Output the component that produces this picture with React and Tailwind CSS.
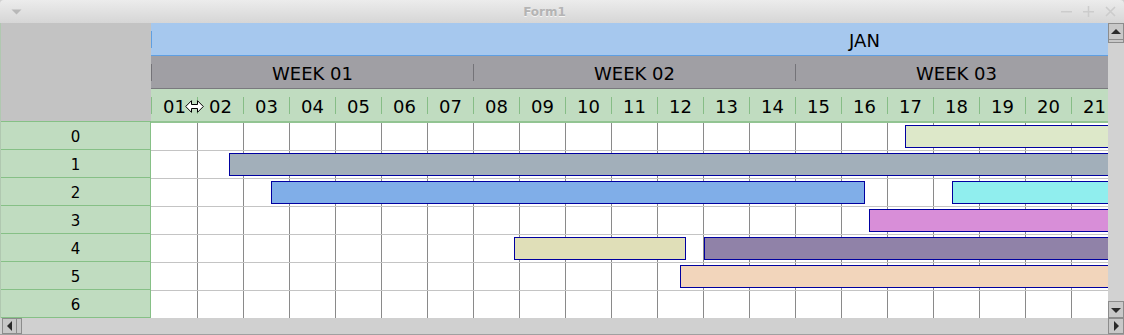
import React from "react";

const DAYS = Array.from({ length: 21 }, (_, i) => String(i + 1).padStart(2, "0"));
const WEEKS = ["WEEK 01", "WEEK 02", "WEEK 03"];

const BARS = [
  { row: 0, left: 754, width: 2000, color: "#dde8c9" },
  { row: 1, left: 78, width: 2000, color: "#a2afba" },
  { row: 2, left: 120, width: 594, color: "#80aee8" },
  { row: 2, left: 801, width: 2000, color: "#90eeee" },
  { row: 3, left: 718, width: 2000, color: "#d88ed8" },
  { row: 4, left: 363, width: 172, color: "#e0dfb8" },
  { row: 4, left: 553, width: 2000, color: "#9082a8" },
  { row: 5, left: 529, width: 2000, color: "#f2d5bb" },
];

function TitleBar() {
  return (
    <div className="h-[23px] flex items-center bg-gradient-to-b from-[#ececec] to-[#d6d6d6] rounded-t-[4px] pl-[10px] pr-[8px]">
      <svg width="11" height="6" viewBox="0 0 11 6" className="ml-[1px]">
        <path d="M0.5 0.5 L10.5 0.5 L5.5 5.5 Z" fill="#b8b8b8" />
      </svg>
      <div className="flex-1 flex justify-center pl-[6px]">
        <span className="text-[12px] font-bold text-[#b4b4b4] [text-shadow:0_1px_0_#f4f4f4]">
          Form1
        </span>
      </div>
      <div className="flex items-center gap-[11px]">
        <svg width="11" height="11" viewBox="0 0 11 11">
          <rect x="0" y="5" width="11" height="1.5" fill="#cccccc" />
        </svg>
        <svg width="11" height="11" viewBox="0 0 11 11">
          <rect x="0" y="5" width="11" height="1.5" fill="#cccccc" />
          <rect x="4.75" y="0" width="1.5" height="11" fill="#cccccc" />
        </svg>
        <svg width="11" height="11" viewBox="0 0 11 11">
          <path d="M1 1 L10 10 M10 1 L1 10" stroke="#cccccc" strokeWidth="1.6" />
        </svg>
      </div>
    </div>
  );
}

function Headers() {
  return (
    <div className="flex flex-col w-[1426px]">
      <div className="h-[33px] flex items-center bg-[#a6c8ee] border-b border-[#5f9fe2]">
        <div className="w-[1426px] flex items-center">
          <span className="w-px h-[17px] bg-[#5f9fe2]" />
          <span className="flex-1 text-center pt-[3px]">JAN</span>
        </div>
      </div>
      <div className="h-[33px] flex items-center bg-[#a09fa4] border-b border-[#7a797e]">
        {WEEKS.map((w) => (
          <div key={w} className="w-[322px] flex items-center shrink-0">
            <span className="w-px h-[17px] bg-[#747378]" />
            <span className="flex-1 text-center pt-[3px]">{w}</span>
          </div>
        ))}
      </div>
      <div className="h-[34px] flex items-center bg-[#c0dcc0] border-b-2 border-[#92c492]">
        {DAYS.map((d) => (
          <div key={d} className="w-[46px] flex items-center shrink-0">
            <span className="w-px h-[17px] bg-[#86bd86]" />
            <span className="flex-1 text-center pt-[2px]">{d}</span>
          </div>
        ))}
      </div>
    </div>
  );
}

function Grid() {
  return (
    <div className="relative w-[1426px]">
      {Array.from({ length: 7 }, (_, r) => (
        <div key={r} className="h-[28px] flex border-b border-[#c4c4c4]">
          {DAYS.map((d, i) => (
            <div
              key={d}
              className={
                i === 0
                  ? "w-[46px] shrink-0 bg-white"
                  : "w-[46px] shrink-0 bg-white border-l border-[#8a8a8a]"
              }
            />
          ))}
        </div>
      ))}
      {BARS.map((b, i) => (
        <div
          key={i}
          className="absolute h-[23px] border border-[#0000a0]"
          style={{ left: b.left, width: b.width, top: b.row * 28 + 2, background: b.color }}
        />
      ))}
    </div>
  );
}

function ArrowBtn({ dir }) {
  const paths = {
    up: "M1 8 L6 3 L11 8 Z",
    down: "M1 4 L6 9 L11 4 Z",
  };
  return (
    <div className="w-[16px] h-[17px] flex items-center justify-center bg-[#c8c8c8] border border-[#8c8c8c]">
      <svg width="12" height="12" viewBox="0 0 12 12">
        <path d={paths[dir]} fill="#2a2a2a" />
      </svg>
    </div>
  );
}

export default function App() {
  return (
    <div
      className="w-[1124px] h-[335px] flex flex-col bg-[#d0d0d0] overflow-hidden text-black"
      style={{ fontFamily: '"DejaVu Sans", sans-serif' }}
    >
      <TitleBar />
      <div className="h-[295px] flex overflow-hidden">
        <div className="w-[151px] shrink-0 flex flex-col border-l border-[#b0c8b0]">
          <div className="h-[99px] bg-[#c3c3c3]" />
          <div className="h-px bg-[#86c086]" />
          {Array.from({ length: 7 }, (_, r) => (
            <div
              key={r}
              className="h-[28px] shrink-0 flex items-center justify-center bg-[#c0dcc0] border-b border-r border-[#86c086] text-[15px] pt-[4px]"
            >
              {r}
            </div>
          ))}
        </div>
        <div className="relative flex-1 overflow-hidden text-[18px]">
          <Headers />
          <Grid />
          <svg
            width="19"
            height="13"
            viewBox="0 0 19 13"
            className="absolute left-[34px] top-[77px]"
          >
            <path
              d="M0.7 6.5 L6.5 0.7 L6.5 4.5 L12.5 4.5 L12.5 0.7 L18.3 6.5 L12.5 12.3 L12.5 8.5 L6.5 8.5 L6.5 12.3 Z"
              fill="#ffffff"
              stroke="#000000"
              strokeWidth="1"
            />
          </svg>
        </div>
        <div className="w-[16px] shrink-0 flex flex-col bg-[#d2d2d2]">
          <ArrowBtn dir="up" />
          <div className="h-[3px] border-x border-b border-[#8c8c8c] bg-[#c8c8c8]" />
          <div className="flex-1" />
          <ArrowBtn dir="down" />
        </div>
      </div>
      <div className="h-[17px] flex bg-[#d0d0d0] border-b border-[#a0a0a0]">
        <div className="ml-[2px] flex">
          <div className="w-[15px] h-[16px] flex items-center justify-center bg-[#c8c8c8] border border-[#8c8c8c]">
            <svg width="12" height="12" viewBox="0 0 12 12">
              <path d="M8 1 L3 6 L8 11 Z" fill="#2a2a2a" />
            </svg>
          </div>
          <div className="w-[5px] h-[16px] bg-[#c8c8c8] border-y border-r border-[#8c8c8c]" />
        </div>
        <div className="flex-1" />
        <div className="w-[16px] h-[16px] flex items-center justify-center bg-[#c8c8c8] border border-[#8c8c8c]">
          <svg width="12" height="12" viewBox="0 0 12 12">
            <path d="M4 1 L9 6 L4 11 Z" fill="#2a2a2a" />
          </svg>
        </div>
      </div>
    </div>
  );
}
